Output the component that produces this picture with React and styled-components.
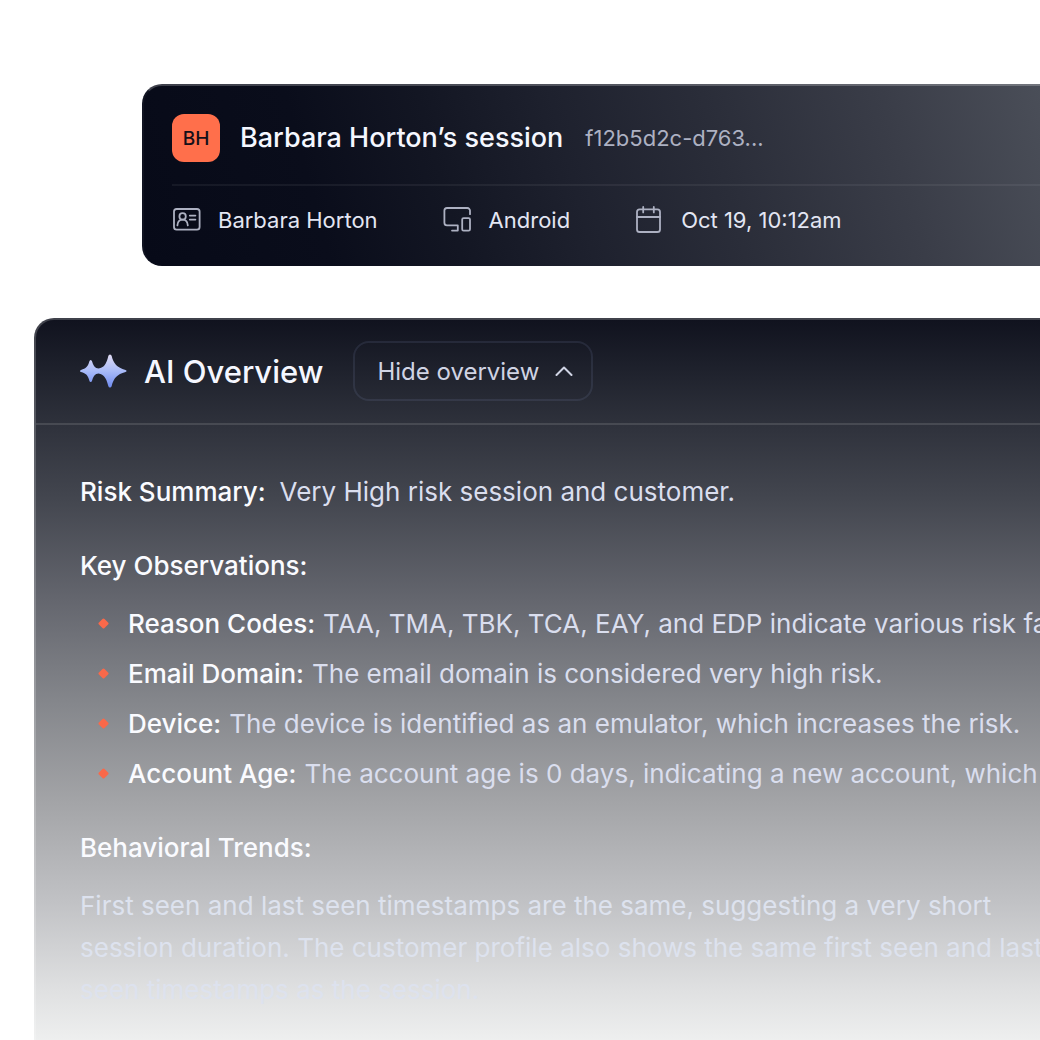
import styled, { createGlobalStyle } from "styled-components";

const facts = [
  { icon: "card", label: "Barbara Horton" },
  { icon: "devices", label: "Android" },
  { icon: "calendar", label: "Oct 19, 10:12am" },
];

const observations = [
  {
    name: "Reason Codes:",
    text: "TAA, TMA, TBK, TCA, EAY, and EDP indicate various risk factors",
  },
  {
    name: "Email Domain:",
    text: "The email domain is considered very high risk.",
  },
  {
    name: "Device:",
    text: "The device is identified as an emulator, which increases the risk.",
  },
  {
    name: "Account Age:",
    text: "The account age is 0 days, indicating a new account, which",
  },
];

const FactIcon = ({ type }) => (
  <LineIcon viewBox="0 0 30 28" aria-hidden="true">
    {type === "card" && (
      <>
        <rect x="2" y="3" width="25.6" height="20.6" rx="2.6" />
        <circle cx="10.6" cy="10.4" r="3.2" />
        <path d="M5.4 19.4c.2-3.6 2.2-5.8 5.2-5.8s5 2.2 5.2 5.8" />
        <path d="M17.8 9.6h5.6M17.8 13.6h5.6" />
      </>
    )}
    {type === "devices" && (
      <>
        <path d="M27 8.2V4.6A2.6 2.6 0 0 0 24.4 2H4A2.6 2.6 0 0 0 1.400 4.600V16.800a2.600 2.600 0 0 0 2.600 2.600H14.800v5.200H9" />
        <rect x="19.2" y="12.2" width="7.8" height="12.4" rx="1.4" />
      </>
    )}
    {type === "calendar" && (
      <>
        <rect x="2" y="3.4" width="23" height="22.6" rx="2.6" />
        <path d="M2 11h23M8.2 1v5.4M18.8 1v5.4" />
      </>
    )}
  </LineIcon>
);

const App = () => {
  return (
    <>
      <GlobalStyle />
      <Page>
        <SessionCard>
          <SessionTop>
            <Avatar>BH</Avatar>
            <SessionTitle>Barbara Horton’s session</SessionTitle>
            <SessionId>f12b5d2c-d763...</SessionId>
          </SessionTop>

          <Facts>
            {facts.map(({ icon, label }) => (
              <Fact key={label}>
                <FactIcon type={icon} />
                {label}
              </Fact>
            ))}
          </Facts>
        </SessionCard>

        <Overview>
          <OverviewHeader>
            <Sparkles viewBox="0 0 48 34" aria-hidden="true">
              <defs>
                <linearGradient id="spark" x1="0" y1="0" x2="0" y2="1">
                  <stop offset="0" stopColor="#e0dbf3" />
                  <stop offset="0.5" stopColor="#a9bbf8" />
                  <stop offset="1" stopColor="#6f8bf0" />
                </linearGradient>
              </defs>
              <path
                fill="url(#spark)"
                d="M30 .5Q31.3 .5 31.7 2C33.5 9.5 37 13.600 45.500 15.900Q47.700 17 45.500 18.100C37 20.400 33.500 24.500 31.700 32Q31.300 33.500 30 33.500T28.300 32C26.900 26 25 21.500 20.500 19.900Q18.300 19.200 16.300 20C14.100 21 13.100 23.500 12.100 26.500Q11.700 28 10.700 28T9.300 26.500C8 21.500 6 19.500 1 18.100Q-1.200 17 1 15.900C6 14.500 8 12.500 9.300 7.500Q9.700 6 10.700 6T12.100 7.500C13.100 10.500 14.100 13 16.300 14Q18.300 14.800 20.500 14.100C25 12.500 26.900 8 28.300 2Q28.700 .5 30 .5Z"
              />
            </Sparkles>
            <OverviewTitle>AI Overview</OverviewTitle>
            <ToggleButton type="button">
              Hide overview
              <Chevron viewBox="0 0 18 10" aria-hidden="true">
                <path d="M1.5 9 9 1.5 16.5 9" />
              </Chevron>
            </ToggleButton>
          </OverviewHeader>

          <OverviewBody>
            <Summary>
              <Strong>Risk Summary:</Strong>
              Very High risk session and customer.
            </Summary>

            <Section>
              <Heading>Key Observations:</Heading>
              <List>
                {observations.map(({ name, text }) => (
                  <Item key={name}>
                    <Bullet viewBox="0 0 12 12" aria-hidden="true">
                      <path d="M5.500 2 9 5.500 5.500 9 2 5.500Z" />
                    </Bullet>
                    <Strong>{name}</Strong>
                    {text}
                  </Item>
                ))}
              </List>
            </Section>

            <Section>
              <Heading>Behavioral Trends:</Heading>
              <Paragraph>
                First seen and last seen timestamps are the same, suggesting a
                very short session duration. The customer profile also shows the
                same first seen and last seen timestamps as the session.
              </Paragraph>
            </Section>
          </OverviewBody>
        </Overview>
      </Page>
    </>
  );
};

export default App;

/* ---------------- styled-components ---------------- */

const GlobalStyle = createGlobalStyle`
  * {
    box-sizing: border-box;
  }

  body {
    margin: 0;
    background: #ffffff;
    font-family: Inter, "Liberation Sans", sans-serif;
    overflow-x: hidden;
  }

  h1, h2, h3, p, ul {
    margin: 0;
    padding: 0;
  }
`;

const Page = styled.main`
  min-height: 100vh;
  display: flex;
  flex-direction: column;
  gap: 52px;
  padding: 84px 0 0 34px;
  overflow: hidden;
`;

const SessionCard = styled.section`
  margin-left: 108px;
  padding: 28px 0 32px 28px;
  border: 2px solid rgba(255, 255, 255, 0.22);
  border-width: 2px 0 0 2px;
  border-left-color: rgba(255, 255, 255, 0.04);
  border-radius: 20px 0 0 20px;
  background: linear-gradient(
      75deg,
      #070a18 0%,
      #0a0d1b 20%,
      #131623 34%,
      #1e212e 48%,
      #2a2d39 64%,
      #3a3d48 83%,
      #4a4e58 100%
    )
    border-box;
`;

const SessionTop = styled.div`
  display: flex;
  align-items: center;
  padding-bottom: 22px;
  border-bottom: 2px solid rgba(255, 255, 255, 0.06);
  white-space: nowrap;
`;

const Avatar = styled.div`
  display: grid;
  place-items: center;
  width: 48px;
  height: 48px;
  margin-right: 20px;
  border-radius: 12px;
  background: #ff6f4b;
  color: #14101a;
  font-size: 19px;
  font-weight: 500;
`;

const SessionTitle = styled.h1`
  color: #f5f7ff;
  font-size: 27px;
  font-weight: 500;
  line-height: 36px;
`;

const SessionId = styled.span`
  margin-left: 22px;
  color: #adb1c2;
  font-size: 22px;
  line-height: 28px;
`;

const Facts = styled.div`
  display: flex;
  align-items: center;
  gap: 65px;
  padding-top: 20px;
  white-space: nowrap;
`;

const Fact = styled.div`
  display: flex;
  align-items: center;
  gap: 16px;
  color: #e3e6f3;
  font-size: 22px;
  line-height: 28px;
`;

const LineIcon = styled.svg`
  width: 30px;
  height: 28px;
  fill: none;
  stroke: #adb1c2;
  stroke-width: 1.8;
  stroke-linecap: round;
  stroke-linejoin: round;
`;

const Overview = styled.section`
  flex: 1;
  margin-right: -32px;
  border: 2px solid rgba(255, 255, 255, 0.2);
  border-width: 2px 0 0 2px;
  border-radius: 20px 0 0 0;
  background: linear-gradient(
      #10121e 0%,
      #1e212c 7%,
      #2f323c 15%,
      #43464f 25%,
      #64666e 39%,
      #84868b 53%,
      #a3a4a7 67%,
      #c1c2c5 81%,
      #dfe0e1 93%,
      #eeefef 100%
    )
    border-box;
`;

const OverviewHeader = styled.header`
  display: flex;
  align-items: center;
  padding: 21px 44px 22px 44px;
  border-bottom: 2px solid rgba(255, 255, 255, 0.12);
`;

const Sparkles = styled.svg`
  width: 48px;
  height: 34px;
`;

const OverviewTitle = styled.h2`
  margin: 0 30px 0 16px;
  color: #f5f7ff;
  font-size: 31px;
  font-weight: 500;
`;

const ToggleButton = styled.button`
  display: flex;
  align-items: center;
  gap: 16px;
  height: 60px;
  padding: 0 18px 0 22px;
  border: 2px solid rgba(150, 165, 210, 0.12);
  border-radius: 16px;
  background: transparent;
  color: #d0d4e4;
  font-family: inherit;
  font-size: 24px;
  font-weight: 400;
  cursor: pointer;
`;

const Chevron = styled.svg`
  width: 18px;
  height: 10px;
  fill: none;
  stroke: #d0d4e4;
  stroke-width: 2;
  stroke-linecap: round;
  stroke-linejoin: round;
`;

const OverviewBody = styled.div`
  display: flex;
  flex-direction: column;
  gap: 32px;
  padding: 46px 0 28px 44px;
  color: #dadeee;
  font-size: 26px;
  font-weight: 400;
  line-height: 42px;
`;

const Strong = styled.strong`
  margin-right: 8px;
  color: #fafbff;
  font-weight: 500;
`;

const Summary = styled.p`
  ${Strong} {
    margin-right: 14px;
  }
`;

const Section = styled.section`
  display: flex;
  flex-direction: column;
  gap: 16px;
`;

const Heading = styled.h3`
  color: #fafbff;
  font-size: inherit;
  font-weight: 500;
`;

const List = styled.ul`
  display: flex;
  flex-direction: column;
  gap: 8px;
  list-style: none;
`;

const Item = styled.li`
  display: flex;
  align-items: center;
  padding-left: 18px;
  white-space: nowrap;
`;

const Bullet = styled.svg`
  flex-shrink: 0;
  width: 12px;
  height: 12px;
  margin-right: 18px;
  fill: #f9694a;
  stroke: #f9694a;
  stroke-width: 3;
  stroke-linejoin: round;
`;

const Paragraph = styled.p`
  color: #dde2ee;
`;
